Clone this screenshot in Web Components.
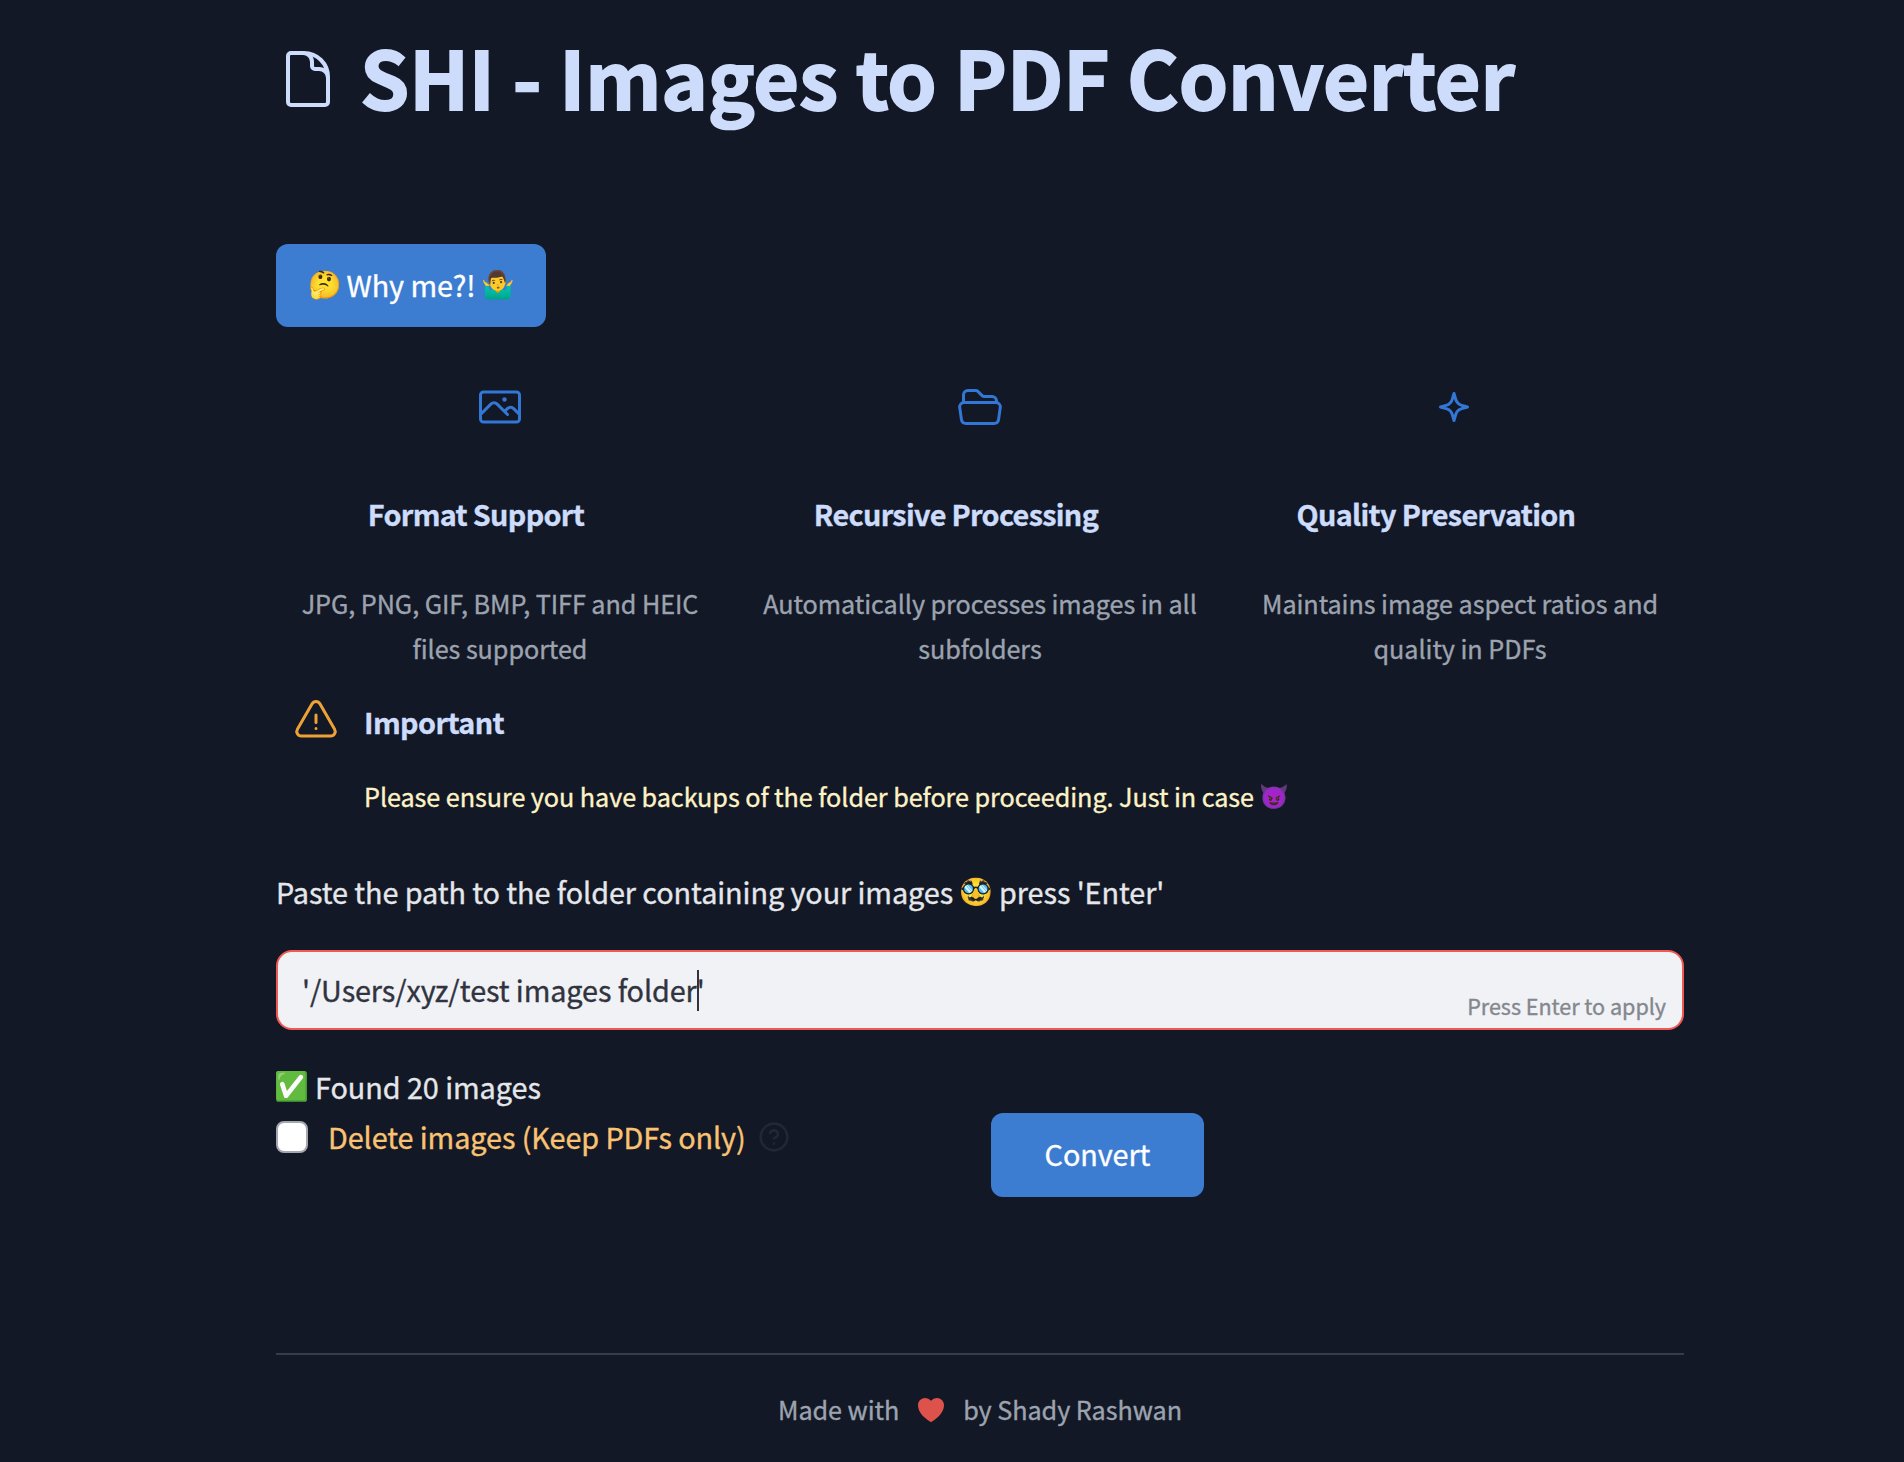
<!DOCTYPE html>
<html lang="en">
<head>
<meta charset="utf-8">
<title>SHI - Images to PDF Converter</title>
<style>
  html, body { margin: 0; background: #121825; }
  body {
    font-family: "Noto Sans CJK JP", "Open Sans", sans-serif;
    font-size: 28.8px; line-height: 40px; letter-spacing: -0.06px; color: #e5e7eb;
    -webkit-text-stroke: 0.35px currentColor;
  }
</style>
</head>
<body>
<shi-app></shi-app>
<script>
const define = (name, html) => customElements.define(name, class extends HTMLElement {
  constructor() {
    super();
    const t = document.createElement('template');
    t.innerHTML = html;
    this.attachShadow({ mode: 'open' }).append(t.content.cloneNode(true));
  }
});

const ICONS = {
  document: '<path d="M19.5 14.25v-2.625a3.375 3.375 0 0 0-3.375-3.375h-1.5A1.125 1.125 0 0 1 13.5 7.125v-1.5a3.375 3.375 0 0 0-3.375-3.375H8.25m2.25 0H5.625c-.621 0-1.125.504-1.125 1.125v17.25c0 .621.504 1.125 1.125 1.125h12.75c.621 0 1.125-.504 1.125-1.125V11.25a9 9 0 0 0-9-9Z"/>',
  photo: '<path d="m2.25 15.75 5.159-5.159a2.25 2.25 0 0 1 3.182 0l5.159 5.159m-1.5-1.5 1.409-1.409a2.25 2.25 0 0 1 3.182 0l2.909 2.909m-18 3.75h16.5a1.5 1.5 0 0 0 1.5-1.5V6a1.5 1.5 0 0 0-1.5-1.5H3.75A1.5 1.5 0 0 0 2.25 6v12a1.5 1.5 0 0 0 1.5 1.5Zm10.5-11.25h.008v.008h-.008V8.25Zm.375 0a.375.375 0 1 1-.75 0 .375.375 0 0 1 .75 0Z"/>',
  folder: '<path d="M3.75 9.776c.112-.017.227-.026.344-.026h15.812c.117 0 .232.009.344.026m-16.5 0a2.25 2.25 0 0 0-1.883 2.542l.857 6a2.25 2.25 0 0 0 2.227 1.932H19.05a2.25 2.25 0 0 0 2.227-1.932l.857-6a2.25 2.25 0 0 0-1.883-2.542m-16.5 0V6A2.25 2.25 0 0 1 6 3.75h3.879a1.5 1.5 0 0 1 1.06.44l2.122 2.12a1.5 1.5 0 0 0 1.06.44H18A2.25 2.25 0 0 1 20.25 9v.776"/>',
  sparkle: '<path d="M9.813 15.904 9 18.75l-.813-2.846a4.5 4.5 0 0 0-3.09-3.09L2.25 12l2.846-.813a4.5 4.5 0 0 0 3.09-3.09L9 5.25l.813 2.846a4.5 4.5 0 0 0 3.09 3.09L15.75 12l-2.846.813a4.5 4.5 0 0 0-3.09 3.09Z"/>',
  warning: '<path d="M12 9v3.75m-9.303 3.376c-.866 1.5.217 3.374 1.948 3.374h14.71c1.73 0 2.813-1.874 1.948-3.374L13.949 3.378c-.866-1.5-3.032-1.5-3.898 0L2.697 16.126ZM12 15.75h.007v.008H12v-.008Z"/>',
  help: '<g stroke-width="2"><circle cx="12" cy="12" r="10"/><path d="M9.09 9a3 3 0 0 1 5.83 1c0 2-3 3-3 3M12 17h.01"/></g>',
  heart: '<path fill="currentColor" stroke="none" d="m11.645 20.91-.007-.003-.022-.012a15.247 15.247 0 0 1-.383-.218 25.18 25.18 0 0 1-4.244-3.17C4.688 15.36 2.25 12.174 2.25 8.25 2.25 5.322 4.714 3 7.688 3A5.5 5.5 0 0 1 12 5.052 5.5 5.5 0 0 1 16.313 3c2.973 0 5.437 2.322 5.437 5.25 0 3.925-2.438 7.111-4.739 9.256a25.175 25.175 0 0 1-4.244 3.17 15.247 15.247 0 0 1-.383.219l-.022.012-.007.004-.003.001a.752.752 0 0 1-.704 0l-.003-.001Z"/>'
};
customElements.define('shi-icon', class extends HTMLElement {
  connectedCallback() {
    if (this.shadowRoot) return;
    this.attachShadow({ mode: 'open' }).innerHTML =
      `<style>:host{display:block;flex:none;width:var(--size,48px);height:var(--size,48px)}svg{display:block;width:100%;height:100%}</style>
       <svg viewBox="0 0 24 24" fill="none" stroke="currentColor" stroke-width="1.5" stroke-linecap="round" stroke-linejoin="round">${ICONS[this.getAttribute('name')]}</svg>`;
  }
});

define('shi-emoji', `<style>
  :host { display: flex; flex: none; justify-content: center; align-items: center; width: 32px; height: 32px;
          font: 27px/32px "Noto Color Emoji", sans-serif; letter-spacing: 0; -webkit-text-stroke: 0; }
  :host([small]) { width: 28px; height: 28px; font-size: 24px; line-height: 28px; }
</style><slot></slot>`);

define('shi-line', `<style>
  :host { display: flex; align-items: center; gap: 7px; height: 40px; white-space: nowrap; }
</style><slot></slot>`);

define('shi-title', `<style>
  :host { display: flex; align-items: flex-start; gap: 20px; height: 106px; color: #cddcfb; }
  shi-icon { --size: 64px; margin-top: 24px; }
  h1 { margin: 0; font-size: 79px; line-height: 106px; font-weight: 700; letter-spacing: -0.16px; white-space: nowrap;
       -webkit-text-stroke: 1.8px currentColor; }
</style><shi-icon name="document"></shi-icon><h1><slot></slot></h1>`);

define('shi-button', `<style>
  :host { display: block; flex: none; }
  button { display: flex; align-items: center; justify-content: center; gap: 6px; box-sizing: border-box;
           width: 100%; height: var(--h, 83px); padding: 0 0 var(--lift, 1px); margin: 0; border: 0; border-radius: 12px;
           background: #3c7dd2; color: #fff; font: inherit; letter-spacing: inherit; white-space: nowrap; }
</style><button><slot></slot></button>`);

define('shi-feature', `<style>
  :host { display: flex; flex-direction: column; align-items: center; flex: 1; }
  h3 { margin: 63px 48px 0 0; font-size: 28.8px; line-height: 40px; font-weight: 700; letter-spacing: -0.68px; color: #cddcfb; white-space: nowrap; }
  p { margin: 47px 0 0; font-size: 25.2px; line-height: 45px; color: #9ca3af; text-align: center; white-space: nowrap; }
</style><slot name="icon"></slot><h3><slot name="heading"></slot></h3><p><slot></slot></p>`);

define('shi-notice', `<style>
  :host { display: flex; align-items: flex-start; gap: 24px; padding-left: 16px; }
  shi-icon { color: #eea236; }
  h3 { margin: 5px 0 32px; font-size: 28.8px; line-height: 40px; font-weight: 700; letter-spacing: -0.6px; color: #cddcfb; }
  p { display: flex; align-items: center; gap: 6px; margin: 0; height: 45px; font-size: 25.2px; line-height: 45px; color: #fef3c7; letter-spacing: -0.06px; white-space: nowrap; }
</style><shi-icon name="warning"></shi-icon><div><h3><slot name="heading"></slot></h3><p><slot></slot></p></div>`);

define('shi-input', `<style>
  :host { display: flex; justify-content: space-between; box-sizing: border-box; height: 80px; padding: 0 16px 0 24px;
          border: 2px solid #f05a54; border-radius: 16px; background: #f0f2f6; color: #31333f; white-space: nowrap; }
  .value { position: relative; line-height: 40px; margin-top: 18px; letter-spacing: -0.1px; }
  .value::after { content: ""; position: absolute; left: 395px; top: 0; width: 2px; height: 41px; background: #31333f; }
  .hint { font-size: 21.6px; line-height: 32px; margin-top: 38px; color: #85878e; letter-spacing: -0.05px; }
</style><div class="value"><slot></slot></div><div class="hint"><slot name="hint"></slot></div>`);

define('shi-checkbox', `<style>
  :host { display: flex; align-items: center; height: 42px; white-space: nowrap; }
  i { flex: none; box-sizing: border-box; width: 32px; height: 32px; border: 2px solid #a6a7ae; border-radius: 8px; background: #fff; }
  span { margin: 0 12px 0 20px; color: #f9c373; letter-spacing: -0.09px; }
  shi-icon { --size: 32px; color: #222635; }
</style><i></i><span><slot></slot></span><shi-icon name="help"></shi-icon>`);

define('shi-footer', `<style>
  :host { display: flex; justify-content: center; align-items: center; gap: 16px; padding-top: 32px;
          border-top: 2px solid #373c48; font-size: 25.2px; line-height: 45px; color: #9ca3af; }
  shi-icon { --size: 32px; color: #de524c; }
</style><span>Made with</span><shi-icon name="heart"></shi-icon><span>by Shady Rashwan</span>`);

define('shi-app', `<style>
  :host { display: flex; flex-direction: column; box-sizing: border-box; height: 1462px; width: 1408px; margin: 0 auto 0 276px; padding-top: 23px; overflow: hidden; }
  .why { width: 270px; margin-top: 115px; }
  .why shi-emoji { margin: 0 -1px 0 1px; }
  .features { display: flex; gap: 32px; margin-top: 56px; }
  .features shi-icon { color: #3377d6; }
  shi-notice { margin-top: 26px; }
  .prompt { margin-top: 53px; letter-spacing: -0.08px; }
  shi-input { margin-top: 38px; }
  .found { margin-top: 37px; }
  .actions { display: flex; margin-top: 6px; height: 84px; }
  shi-checkbox { width: 715px; margin-top: 3px; }
  .convert { width: 213px; --h: 84px; --lift: 3px; }
  shi-footer { margin-top: 156px; }
  .devil { filter: hue-rotate(-12deg) saturate(.65) brightness(1.05); }
  .check { font-size: 28px; filter: hue-rotate(12deg) saturate(1.15); }
</style>
<shi-title>SHI - Images to PDF Converter</shi-title>
<shi-button class="why"><shi-emoji>🤔</shi-emoji><span>Why me?!</span><shi-emoji>🤷‍♂️</shi-emoji></shi-button>
<div class="features">
  <shi-feature><shi-icon slot="icon" name="photo"></shi-icon><span slot="heading">Format Support</span>JPG, PNG, GIF, BMP, TIFF and HEIC<br>files supported</shi-feature>
  <shi-feature><shi-icon slot="icon" name="folder"></shi-icon><span slot="heading">Recursive Processing</span>Automatically processes images in all<br>subfolders</shi-feature>
  <shi-feature><shi-icon slot="icon" name="sparkle"></shi-icon><span slot="heading">Quality Preservation</span>Maintains image aspect ratios and<br>quality in PDFs</shi-feature>
</div>
<shi-notice><span slot="heading">Important</span><span>Please ensure you have backups of the folder before proceeding. Just in case</span><shi-emoji small class="devil">😈</shi-emoji></shi-notice>
<shi-line class="prompt"><span>Paste the path to the folder containing your images</span><shi-emoji>🥸</shi-emoji><span>press 'Enter'</span></shi-line>
<shi-input>'/Users/xyz/test images folder'<span slot="hint">Press Enter to apply</span></shi-input>
<shi-line class="found"><shi-emoji class="check">✅</shi-emoji><span>Found 20 images</span></shi-line>
<div class="actions">
  <shi-checkbox>Delete images (Keep PDFs only)</shi-checkbox>
  <shi-button class="convert">Convert</shi-button>
</div>
<shi-footer></shi-footer>`);
</script>
</body>
</html>
